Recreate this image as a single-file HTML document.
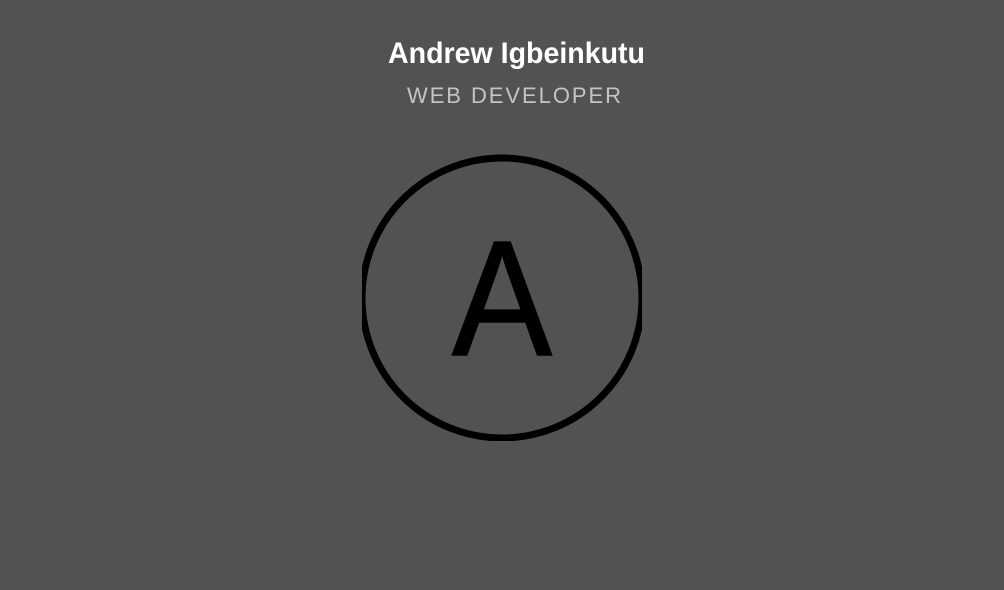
<!DOCTYPE html>
<html><head><meta charset="utf-8"><style>
html,body{margin:0;padding:0;background:#525252;width:1004px;height:590px;overflow:hidden}
</style></head><body>
<svg width="1004" height="590" viewBox="0 0 1004 590" xmlns="http://www.w3.org/2000/svg">
<rect width="1004" height="590" fill="#525252"/>
<text x="388" y="63" font-family="Liberation Sans, sans-serif" font-size="30" font-weight="bold" fill="#fff" textLength="257" lengthAdjust="spacingAndGlyphs">Andrew Igbeinkutu</text>
<text x="407" y="103" font-family="Liberation Sans, sans-serif" font-size="22" fill="#c4c4c4" textLength="214" lengthAdjust="spacing">WEB DEVELOPER</text>
<defs><clipPath id="c"><rect x="362" y="150" width="280" height="291"/></clipPath></defs>
<g clip-path="url(#c)">
<circle cx="502" cy="298" r="140" fill="none" stroke="#000" stroke-width="7"/>
</g>
<text x="502" y="355" text-anchor="middle" font-family="Liberation Sans, sans-serif" font-size="164" fill="#000" stroke="#000" stroke-width="1.5" textLength="100" lengthAdjust="spacingAndGlyphs">A</text>
</svg>
</body></html>
